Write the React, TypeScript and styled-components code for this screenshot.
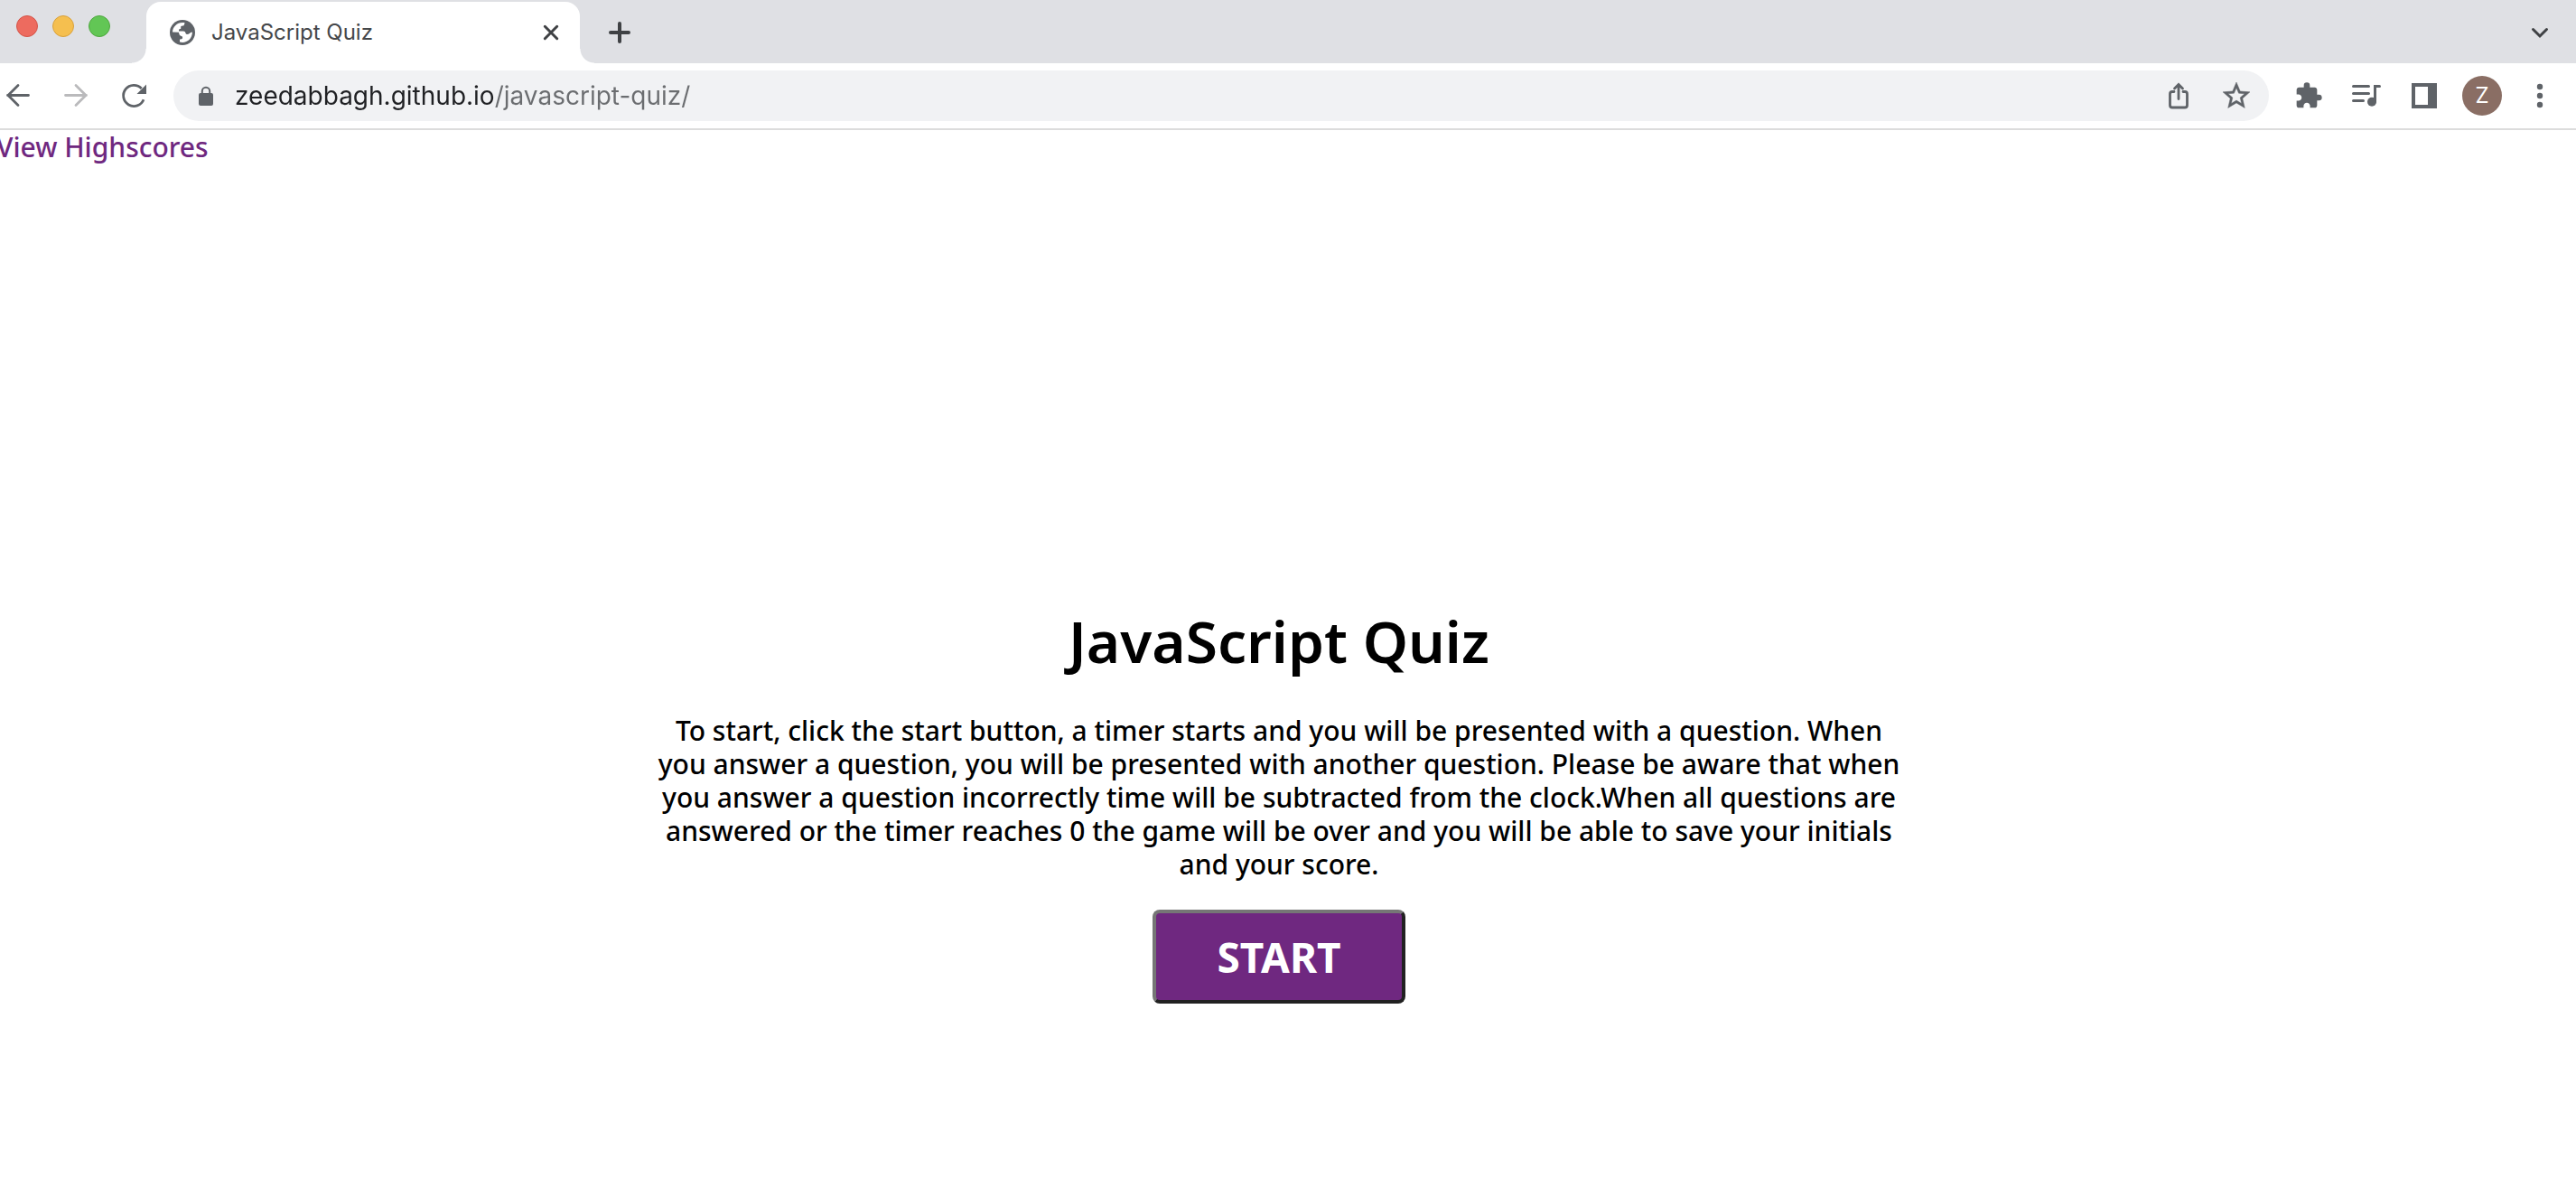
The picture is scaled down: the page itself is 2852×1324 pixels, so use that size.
import React from "react";
import styled, { createGlobalStyle } from "styled-components";
import { MdExtension, MdStarOutline } from "react-icons/md";

const GlobalStyle = createGlobalStyle`
  * { box-sizing: border-box; }
  body { margin: 0; background: #fff; overflow-x: hidden; }
  button { font: inherit; cursor: pointer; }
`;

const uiFont = `Inter, Roboto, "Liberation Sans", sans-serif`;
const pageFont = `"Trebuchet MS", "Noto Sans", "Open Sans", sans-serif`;

const Window = styled.div`
  min-height: 100vh;
  display: flex;
  flex-direction: column;
  font-family: ${uiFont};
`;

const TabStrip = styled.header`
  display: flex;
  align-items: stretch;
  height: 70px;
  padding: 2px 20px 0 18px;
  background: #dfe0e4;
`;

const WindowControls = styled.div`
  display: flex;
  align-items: flex-start;
  gap: 16px;
  width: 144px;
  padding-top: 15px;
`;

const Light = styled.button<{ $fill: string; $edge: string }>`
  width: 24px;
  height: 24px;
  padding: 0;
  border: 1px solid ${(p) => p.$edge};
  border-radius: 50%;
  background: ${(p) => p.$fill};
`;

const Tab = styled.div`
  position: relative;
  display: flex;
  align-items: center;
  width: 480px;
  padding: 0 12px 0 26px;
  border-radius: 16px 16px 0 0;
  background: #fff;

  &::before,
  &::after {
    content: "";
    position: absolute;
    bottom: 0;
    width: 16px;
    height: 16px;
  }
  &::before {
    right: 100%;
    background: radial-gradient(circle at 0 0, transparent 15px, #fff 16px);
  }
  &::after {
    left: 100%;
    background: radial-gradient(circle at 100% 0, transparent 15px, #fff 16px);
  }
`;

const TabTitle = styled.span`
  flex: 1;
  margin-left: 18px;
  font-size: 24px;
  line-height: 32px;
  color: #45474a;
`;

const IconButton = styled.button<{ $color?: string }>`
  display: flex;
  flex: none;
  align-items: center;
  justify-content: center;
  align-self: center;
  width: 40px;
  height: 40px;
  padding: 0;
  border: 0;
  background: none;
  color: ${(p) => p.$color ?? "#5f6368"};

  svg { flex: none; }
`;

const NewTab = styled(IconButton)`
  margin-left: 24px;
`;

const TabSearch = styled(IconButton)`
  margin-left: auto;
`;

const Toolbar = styled.nav`
  display: flex;
  align-items: center;
  gap: 24px;
  height: 74px;
  padding-right: 20px;
  border-bottom: 2px solid #dcdcdc;
  background: #fff;
`;

const Omnibox = styled.form`
  display: flex;
  flex: 1;
  align-items: center;
  gap: 24px;
  min-width: 0;
  height: 56px;
  padding: 0 16px;
  border-radius: 28px;
  background: #f1f2f4;
`;

const Site = styled.div`
  display: flex;
  flex: 1;
  align-items: center;
  gap: 12px;
  min-width: 0;
`;

/* The host part of the address is darker than its path. */
const Address = styled.input`
  flex: 1;
  min-width: 0;
  height: 40px;
  padding: 0;
  border: 0;
  outline: 0;
  font: 28px/40px ${uiFont};
  color: #202124;
  background: linear-gradient(90deg, #202124 287px, #6b6d70 287px);
  background-clip: text;
  -webkit-background-clip: text;
  -webkit-text-fill-color: transparent;
`;

const Avatar = styled.span`
  display: flex;
  flex: none;
  align-items: center;
  justify-content: center;
  width: 44px;
  height: 44px;
  border-radius: 50%;
  background: #8a6e64;
  color: #fff;
  font-size: 24px;
  line-height: 32px;
`;

const Page = styled.div`
  flex: 1;
  margin-left: -20px;
  font-family: ${pageFont};
  font-size: 30px;
  font-weight: 500;
  line-height: 37px;
`;

const TopBar = styled.div`
  display: flex;
  padding-left: 16px;
`;

const ScoresLink = styled.a`
  color: #6f2880;
  text-decoration: none;
`;

const Main = styled.main`
  display: flex;
  flex-direction: column;
  align-items: center;
  padding-top: 37vh;
  text-align: center;
`;

const Title = styled.h1`
  margin: 0;
  font-size: 64px;
  font-weight: 600;
  line-height: 78px;
  color: #000;
`;

const Intro = styled.p`
  max-width: 1388px;
  margin: 41px 0 32px;
  color: #000;
`;

const StartButton = styled.button`
  && {
    padding: 18px 67px;
    border: 4px solid;
    border-color: #767676 #212121 #212121 #767676;
    border-radius: 8px;
    background: #6f2880;
    color: #fff;
    font-size: 46px;
    font-weight: 700;
    line-height: 60px;
  }
`;

const stroke = { fill: "none", stroke: "currentColor", strokeLinecap: "round" as const };

const Icon = ({ children }: { children: React.ReactNode }) => (
  <svg width="40" height="40" viewBox="0 0 40 40" aria-hidden="true">{children}</svg>
);

const Globe = () => (
  <svg width="28" height="28" viewBox="0 0 28 28" aria-hidden="true">
    <circle cx="14" cy="14" r="14" fill="#5f6368" />
    <path
      fill="#fff"
      d="M3 13.5C3 8 8 3 14 3c1.200 0 2 .1 2.800.4C15.800 4.200 16.300 6.500 14.500 6.500c-2.500 0-2.500 1-2.200 2.500.2 1.300-2.300.8-2.300 2.300v1.200h5c3 0 2 3.500 4 3.500 2.500 0 3-2 5.900-2.500C25 20 20 25 14 25c-1 0-2-.1-3-.4v-3c3 0 4-1.600 2.300-3.600C12 18 10.500 17.500 10 13.800z"
    />
  </svg>
);

export default function App() {
  return (
    <Window>
      <GlobalStyle />
      <TabStrip>
        <WindowControls>
          <Light $fill="#ed6b5f" $edge="#d35549" aria-label="Close window" />
          <Light $fill="#f5bf4f" $edge="#d8a13d" aria-label="Minimize window" />
          <Light $fill="#62c655" $edge="#4fa73f" aria-label="Zoom window" />
        </WindowControls>
        <Tab>
          <Globe />
          <TabTitle>JavaScript Quiz</TabTitle>
          <IconButton $color="#3f4144" aria-label="Close tab">
            <Icon><path d="M13.300 13.300l13.400 13.400M26.700 13.300L13.300 26.700" {...stroke} strokeWidth="3" /></Icon>
          </IconButton>
        </Tab>
        <NewTab $color="#3f4144" aria-label="New tab">
          <Icon><path d="M20 10v20M10 20h20" {...stroke} strokeWidth="4" /></Icon>
        </NewTab>
        <TabSearch $color="#3f4144" aria-label="Search tabs">
          <Icon><path d="M12.500 16.500l7.500 7.500 7.500-7.500" {...stroke} strokeWidth="3" /></Icon>
        </TabSearch>
      </TabStrip>

      <Toolbar>
        <IconButton aria-label="Back">
          <Icon><path d="M31.500 19.500H8.500M20 8.500l-11 11 11 11" {...stroke} strokeWidth="2.800" /></Icon>
        </IconButton>
        <IconButton $color="#bababc" aria-label="Forward">
          <Icon><path d="M8.500 19.500h23M20 8.500l11 11-11 11" {...stroke} strokeWidth="2.800" /></Icon>
        </IconButton>
        <IconButton aria-label="Reload">
          <Icon>
            <path d="M31 24.200A11.600 11.600 0 1 1 28.700 12" fill="none" stroke="currentColor" strokeWidth="2.800" />
            <path d="M34 7.500V18H23.500z" fill="currentColor" />
          </Icon>
        </IconButton>
        <Omnibox onSubmit={(e) => e.preventDefault()}>
          <Site>
            <IconButton type="button" aria-label="Site information">
              <Icon>
                <rect x="12" y="17" width="16" height="14" rx="2" fill="currentColor" />
                <path d="M15.800 17.500V15a4.200 4.200 0 0 1 8.400 0v2.500" {...stroke} strokeWidth="2" />
              </Icon>
            </IconButton>
            <Address aria-label="Address" defaultValue="zeedabbagh.github.io/javascript-quiz/" spellCheck={false} />
          </Site>
          <IconButton type="button" aria-label="Share">
            <Icon>
              <path d="M15 15.500h-2a2.500 2.500 0 0 0-2.500 2.500v12.500A2.500 2.500 0 0 0 13 33h14a2.500 2.500 0 0 0 2.500-2.500V18a2.500 2.500 0 0 0-2.500-2.500h-2M20 23.500V8M15.500 12L20 7.500l4.500 4.500" {...stroke} strokeWidth="2.800" />
            </Icon>
          </IconButton>
          <IconButton type="button" aria-label="Bookmark this page">
            <MdStarOutline size={36} stroke="currentColor" strokeWidth="0.3" />
          </IconButton>
        </Omnibox>
        <IconButton aria-label="Extensions"><MdExtension size={32} /></IconButton>
        <IconButton aria-label="Media controls">
          <Icon>
            <path d="M5.500 9.500h17M5.500 17.500h17M5.500 25.500h11" {...stroke} strokeWidth="3" />
            <path d="M29.500 26.500V9.500H34.500" {...stroke} strokeWidth="3" />
            <circle cx="26" cy="26.700" r="5" fill="currentColor" />
          </Icon>
        </IconButton>
        <IconButton aria-label="Side panel">
          <Icon><path fillRule="evenodd" fill="currentColor" d="M6 6h28v28H6zM10 10v20h14V10z" /></Icon>
        </IconButton>
        <IconButton aria-label="Profile"><Avatar>Z</Avatar></IconButton>
        <IconButton aria-label="Menu">
          <Icon>
            <g fill="currentColor">
              <circle cx="20" cy="10" r="3.200" />
              <circle cx="20" cy="20" r="3.200" />
              <circle cx="20" cy="30" r="3.200" />
            </g>
          </Icon>
        </IconButton>
      </Toolbar>

      <Page>
        <TopBar>
          <ScoresLink href="#highscores">View Highscores</ScoresLink>
        </TopBar>
        <Main>
          <Title>JavaScript Quiz</Title>
          <Intro>
            To start, click the start button, a timer starts and you will be presented with a question. When
            you answer a question, you will be presented with another question. Please be aware that when you
            answer a question incorrectly time will be subtracted from the clock.When all questions are
            answered or the timer reaches 0 the game will be over and you will be able to save your initials
            and your score.
          </Intro>
          <StartButton type="button">START</StartButton>
        </Main>
      </Page>
    </Window>
  );
}
